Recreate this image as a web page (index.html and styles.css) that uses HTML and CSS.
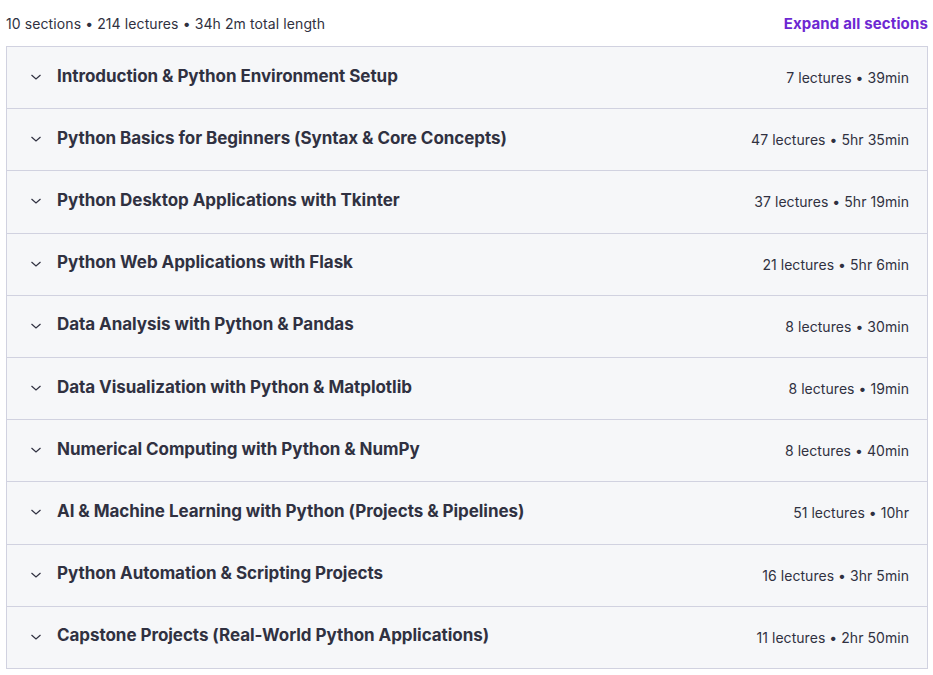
FILE: index.html
```html
<!DOCTYPE html>
<html>
<head>
<meta charset="utf-8">
<link rel="stylesheet" href="styles.css">
</head>
<body>
<div class="curriculum">
  <div class="summary">
    <span class="counts">10 sections • 214 lectures • 34h 2m total length</span>
    <button class="expand">Expand all sections</button>
  </div>
  <div class="sections">
    <div class="section"><span class="chev"><svg width="12" height="12" viewBox="0 0 12 12"><path d="M1.5 4 L6 8 L10.5 4" fill="none" stroke="currentColor" stroke-width="1.2"/></svg></span><span class="title">Introduction &amp; Python Environment Setup</span><span class="meta">7 lectures • 39min</span></div>
    <div class="section"><span class="chev"><svg width="12" height="12" viewBox="0 0 12 12"><path d="M1.5 4 L6 8 L10.5 4" fill="none" stroke="currentColor" stroke-width="1.2"/></svg></span><span class="title">Python Basics for Beginners (Syntax &amp; Core Concepts)</span><span class="meta">47 lectures • 5hr 35min</span></div>
    <div class="section"><span class="chev"><svg width="12" height="12" viewBox="0 0 12 12"><path d="M1.5 4 L6 8 L10.5 4" fill="none" stroke="currentColor" stroke-width="1.2"/></svg></span><span class="title">Python Desktop Applications with Tkinter</span><span class="meta">37 lectures • 5hr 19min</span></div>
    <div class="section"><span class="chev"><svg width="12" height="12" viewBox="0 0 12 12"><path d="M1.5 4 L6 8 L10.5 4" fill="none" stroke="currentColor" stroke-width="1.2"/></svg></span><span class="title">Python Web Applications with Flask</span><span class="meta">21 lectures • 5hr 6min</span></div>
    <div class="section"><span class="chev"><svg width="12" height="12" viewBox="0 0 12 12"><path d="M1.5 4 L6 8 L10.5 4" fill="none" stroke="currentColor" stroke-width="1.2"/></svg></span><span class="title">Data Analysis with Python &amp; Pandas</span><span class="meta">8 lectures • 30min</span></div>
    <div class="section"><span class="chev"><svg width="12" height="12" viewBox="0 0 12 12"><path d="M1.5 4 L6 8 L10.5 4" fill="none" stroke="currentColor" stroke-width="1.2"/></svg></span><span class="title">Data Visualization with Python &amp; Matplotlib</span><span class="meta">8 lectures • 19min</span></div>
    <div class="section"><span class="chev"><svg width="12" height="12" viewBox="0 0 12 12"><path d="M1.5 4 L6 8 L10.5 4" fill="none" stroke="currentColor" stroke-width="1.2"/></svg></span><span class="title">Numerical Computing with Python &amp; NumPy</span><span class="meta">8 lectures • 40min</span></div>
    <div class="section"><span class="chev"><svg width="12" height="12" viewBox="0 0 12 12"><path d="M1.5 4 L6 8 L10.5 4" fill="none" stroke="currentColor" stroke-width="1.2"/></svg></span><span class="title">AI &amp; Machine Learning with Python (Projects &amp; Pipelines)</span><span class="meta">51 lectures • 10hr</span></div>
    <div class="section"><span class="chev"><svg width="12" height="12" viewBox="0 0 12 12"><path d="M1.5 4 L6 8 L10.5 4" fill="none" stroke="currentColor" stroke-width="1.2"/></svg></span><span class="title">Python Automation &amp; Scripting Projects</span><span class="meta">16 lectures • 3hr 5min</span></div>
    <div class="section"><span class="chev"><svg width="12" height="12" viewBox="0 0 12 12"><path d="M1.5 4 L6 8 L10.5 4" fill="none" stroke="currentColor" stroke-width="1.2"/></svg></span><span class="title">Capstone Projects (Real-World Python Applications)</span><span class="meta">11 lectures • 2hr 50min</span></div>
  </div>
</div>
</body>
</html>
```

FILE: styles.css
```css
* { box-sizing: border-box; }
body {
  margin: 0;
  background: #fff;
  font-family: Inter, "Noto Sans", sans-serif;
  color: #303141;
}
.curriculum {
  padding: 0 5px 0 6px;
}
.summary {
  height: 46px;
  display: flex;
  align-items: center;
  justify-content: space-between;
}
.counts {
  font-size: 14px;
  color: #303141;
  letter-spacing: 0.1px;
}
.expand {
  background: none;
  border: none;
  padding: 0;
  font-family: inherit;
  font-size: 15px;
  font-weight: 700;
  color: #6d28d2;
  letter-spacing: 0.15px;
  cursor: pointer;
}
.sections {
  border: 1px solid #d1d2e0;
  border-bottom: none;
}
.section {
  display: flex;
  align-items: center;
  height: 62.2px;
  padding: 0 18px 0 23px;
  background: #f6f7f9;
  border-bottom: 1px solid #d1d2e0;
}
.chev {
  display: flex;
  width: 12px;
  color: #303141;
  margin-right: 15px;
  margin-top: -1px;
}
.title {
  flex: 1;
  font-size: 17px;
  font-weight: 700;
  letter-spacing: -0.05px;
  margin-top: -4px;
}
.meta {
  font-size: 14px;
  letter-spacing: 0.05px;
  margin-top: 0;
}
```
